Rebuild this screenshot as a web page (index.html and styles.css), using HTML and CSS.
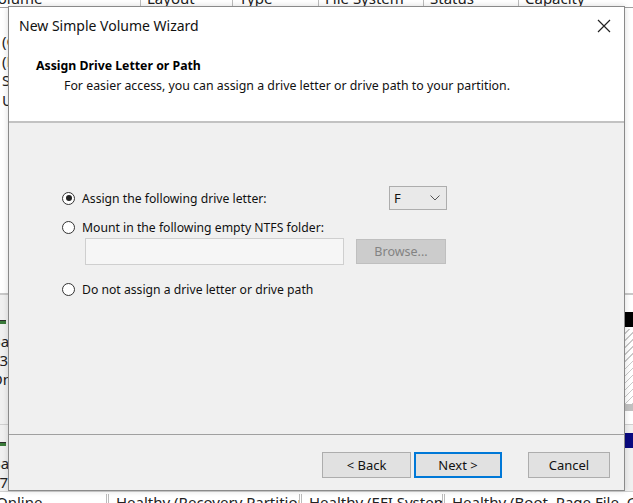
FILE: index.html
```html
<!DOCTYPE html>
<html>
<head>
<meta charset="utf-8">
<link rel="stylesheet" href="styles.css">
</head>
<body>
<div class="desktop">
  <div class="colhead">
    <div class="col c1"><span>Volume</span></div>
    <div class="col c2"><span>Layout</span></div>
    <div class="col c3"><span>Type</span></div>
    <div class="col c4"><span>File System</span></div>
    <div class="col c5"><span>Status</span></div>
    <div class="col c6"><span>Capacity</span></div>
  </div>
  <div class="vollist">
    <div class="vrow">(C:)</div>
    <div class="vrow">(Disk 0 partition 1)</div>
    <div class="vrow">SSD (E:)</div>
    <div class="vrow">USB (D:)</div>
  </div>
  <div class="diskarea">
    <div class="disk d1">
      <div class="disklabel">
        <div class="dbar"></div>
        <div class="dtext">Basic</div>
        <div class="dtext">931.51 GB</div>
        <div class="dtext">Online</div>
      </div>
      <div class="dspacer"></div>
      <div class="unalloc">
        <div class="ubar"></div>
        <div class="hatch"></div>
      </div>
    </div>
    <div class="disk d2">
      <div class="disklabel">
        <div class="dbar"></div>
        <div class="dtext">Basic</div>
        <div class="dtext">476.92 GB</div>
      </div>
      <div class="dspacer"></div>
      <div class="navy"></div>
    </div>
    <div class="statusrow">
      <div class="scell s1">Online</div>
      <div class="scell s2">Healthy (Recovery Partition)</div>
      <div class="scell s3">Healthy (EFI System Partition)</div>
      <div class="scell s4">Healthy (Boot, Page File, Crash Dump, Primary Partition)</div>
    </div>
  </div>

  <div class="dialog">
    <div class="top">
      <div class="titlebar">
        <span class="title">New Simple Volume Wizard</span>
        <svg class="close" width="14" height="14" viewBox="0 0 14 14"><path d="M1 1L13 13M13 1L1 13" stroke="#222" stroke-width="1.2" fill="none"/></svg>
      </div>
      <div class="header">
        <div class="h1">Assign Drive Letter or Path</div>
        <div class="h2">For easier access, you can assign a drive letter or drive path to your partition.</div>
      </div>
    </div>
    <div class="body">
      <div class="row r1">
        <span class="radio checked"></span>
        <span class="label">Assign the following drive letter:</span>
        <div class="combo">
          <span class="cval">F</span>
          <svg class="chev" width="10" height="6" viewBox="0 0 10 6"><path d="M0.5 0.5L5 5L9.5 0.5" stroke="#555" stroke-width="1" fill="none"/></svg>
        </div>
      </div>
      <div class="row r2">
        <span class="radio"></span>
        <span class="label">Mount in the following empty NTFS folder:</span>
      </div>
      <div class="row r2b">
        <div class="textbox"></div>
        <div class="browse">Browse...</div>
      </div>
      <div class="row r3">
        <span class="radio"></span>
        <span class="label">Do not assign a drive letter or drive path</span>
      </div>
    </div>
    <div class="footer">
      <div class="btn back">&lt; Back</div>
      <div class="btn next">Next &gt;</div>
      <div class="btn cancel">Cancel</div>
    </div>
  </div>
</div>
</body>
</html>
```

FILE: styles.css
```css
html, body {
  margin: 0;
  padding: 0;
}
body {
  width: 633px;
  height: 503px;
  overflow: hidden;
  font-family: "Noto Sans", "Liberation Sans", sans-serif;
  font-size: 12px;
  color: #000;
  background: #fff;
}
.desktop {
  position: relative;
  width: 633px;
  height: 503px;
  overflow: hidden;
  background: #fff;
  display: flex;
  flex-direction: column;
}
.colhead {
  display: flex;
  height: 7px;
  overflow: hidden;
  border-bottom: 1px solid #a0a0a0;
  background: #fff;
  flex-shrink: 0;
}
.col {
  height: 7px;
  overflow: hidden;
  border-right: 1px solid #bcbcbc;
  box-sizing: border-box;
}
.col span {
  display: block;
  margin-top: -11px;
  padding-left: 6px;
  font-size: 15px;
  line-height: 18px;
  color: #222;
  white-space: nowrap;
}
.c1 { width: 141px; }
.c1 span { margin-left: -17px; }
.c2 { width: 92px; }
.c3 { width: 86px; }
.c4 { width: 105px; }
.c5 { width: 95px; }
.c6 { width: 114px; border-right: none; }

.vollist {
  height: 285px;
  padding-top: 24px;
  box-sizing: border-box;
  flex-shrink: 0;
}
.vrow {
  height: 19.5px;
  font-size: 15px;
  line-height: 19px;
  padding-left: 2px;
  color: #222;
}
.diskarea {
  flex: 1;
  background: #f0f0f0;
  border-top: 2px solid #c8c8c8;
  display: flex;
  flex-direction: column;
}
.disk {
  display: flex;
  border-bottom: 1px solid #d0d0d0;
  flex-shrink: 0;
}
.d1 { height: 129px; }
.d2 { height: 66px; }
.disklabel {
  width: 8px;
  overflow: hidden;
  background: #f0f0f0;
}
.d1 .disklabel { padding-top: 25px; }
.d2 .disklabel { padding-top: 17px; }
.dbar {
  height: 3px;
  background: #3a7a3a;
  border-top: 1px solid #2c2c2c;
  margin-bottom: 8px;
  width: 6px;
}
.dtext {
  font-size: 15px;
  line-height: 19px;
  margin-left: -9px;
  color: #222;
  white-space: nowrap;
}
.dspacer { flex: 1; }
.unalloc {
  width: 10px;
  padding-top: 17px;
  border-left: 1px solid #777;
  background: #fff;
}
.ubar {
  height: 15px;
  background: #000;
}
.hatch {
  height: 75px;
  margin-top: 2px;
  background: repeating-linear-gradient(135deg, #fff 0 4px, #c8c8c8 4px 5px);
  border-bottom: 7px solid #c0c0c0;
}
.navy {
  width: 10px;
  margin-top: 8px;
  height: 15px;
  background: #0a0a80;
}
.statusrow {
  display: flex;
  background: #fff;
  flex: 1;
  padding-top: 2px;
}
.scell {
  font-size: 15px;
  line-height: 16px;
  white-space: nowrap;
  overflow: hidden;
  color: #222;
  box-sizing: border-box;
}
.s1 { width: 113px; margin-left: -4px; border-right: 3px double #bbb; }
.s2 { width: 193px; padding-left: 7px; border-right: 3px double #bbb; }
.s3 { width: 143px; padding-left: 7px; border-right: 3px double #bbb; }
.s4 { flex: 1; padding-left: 7px; }

/* dialog */
.dialog {
  position: absolute;
  left: 8px;
  top: 6px;
  width: 617px;
  height: 485px;
  box-sizing: border-box;
  border: 1px solid #8a8a8a;
  background: #f0f0f0;
  display: flex;
  flex-direction: column;
  box-shadow: 0 0 6px rgba(0,0,0,0.15);
}
.top {
  background: #fff;
  height: 114px;
  border-bottom: 2px solid #c2c2c2;
  flex-shrink: 0;
}
.titlebar {
  height: 37px;
  display: flex;
  align-items: center;
  justify-content: space-between;
  padding: 0 13px 0 10px;
}
.title {
  font-size: 14px;
  color: #111;
}
.close { display: block; }
.header {
  padding-left: 27px;
  padding-top: 13px;
}
.h1 {
  font-weight: bold;
  font-size: 12.3px;
  line-height: 18px;
  color: #000;
}
.h2 {
  padding-left: 28px;
  font-size: 12.35px;
  line-height: 18px;
  margin-top: 2px;
  color: #111;
}
.body {
  flex: 1;
  padding-left: 53px;
  display: flex;
  flex-direction: column;
}
.row {
  display: flex;
  align-items: center;
}
.r1 { margin-top: 63px; height: 24px; }
.r2 { margin-top: 9px; height: 16px; }
.r2b { margin-top: 3px; height: 27px; padding-left: 23px; }
.r3 { margin-top: 16px; height: 16px; }
.radio {
  width: 13px;
  height: 13px;
  box-sizing: border-box;
  border: 1px solid #333;
  border-radius: 50%;
  background: #fff;
  position: relative;
  flex-shrink: 0;
}
.radio.checked::after {
  content: "";
  position: absolute;
  left: 2.5px;
  top: 2.5px;
  width: 6px;
  height: 6px;
  border-radius: 50%;
  background: #222;
}
.label {
  margin-left: 7px;
  font-size: 12.2px;
  color: #111;
  white-space: nowrap;
}
.combo {
  margin-left: auto;
  margin-right: 177px;
  width: 58px;
  height: 24px;
  box-sizing: border-box;
  border: 1px solid #adadad;
  background: #e9e9e9;
  display: flex;
  align-items: center;
  justify-content: space-between;
  padding: 0 6px 0 4px;
}
.cval { font-size: 13px; color: #111; }
.chev { display: block; }
.textbox {
  width: 259px;
  height: 27px;
  box-sizing: border-box;
  border: 1px solid #cfcfcf;
  background: #f6f6f6;
}
.browse {
  margin-left: 12px;
  width: 90px;
  height: 25px;
  box-sizing: border-box;
  border: 1px solid #bfbfbf;
  background: #cccccc;
  color: #838383;
  font-size: 12.5px;
  display: flex;
  align-items: center;
  justify-content: center;
}
.footer {
  height: 56px;
  border-top: 1px solid #a0a0a0;
  display: flex;
  padding-top: 17px;
  padding-right: 14px;
  box-sizing: border-box;
  justify-content: flex-end;
  flex-shrink: 0;
}
.btn {
  height: 26px;
  box-sizing: border-box;
  border: 1px solid #adadad;
  background: #e1e1e1;
  font-size: 13px;
  color: #111;
  display: flex;
  align-items: center;
  justify-content: center;
}
.back { width: 89px; }
.next { width: 88px; margin-left: 3px; border: 2px solid #0078d7; }
.cancel { width: 82px; margin-left: 26px; }
```
